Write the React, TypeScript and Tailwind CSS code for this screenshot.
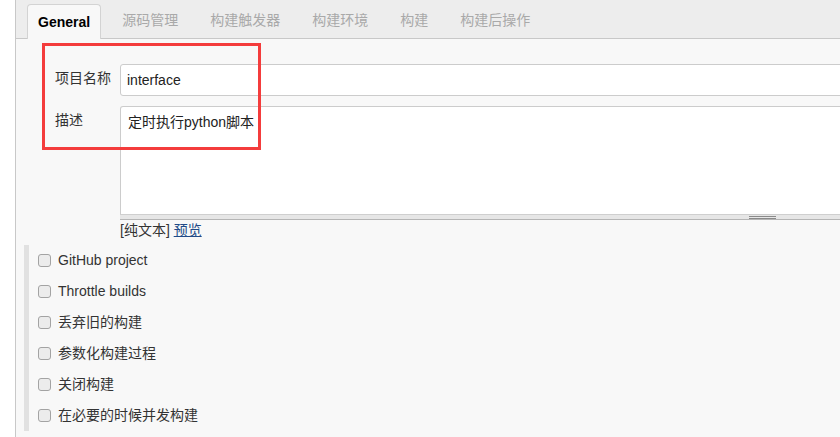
import React from "react";

const font = { fontFamily: '"Liberation Sans", "Noto Sans CJK SC", Arial, sans-serif' };

const tabs = ["源码管理", "构建触发器", "构建环境", "构建", "构建后操作"];
const options = ["GitHub project", "Throttle builds", "丢弃旧的构建", "参数化构建过程", "关闭构建", "在必要的时候并发构建"];

export default function App() {
  return (
    <div className="w-[840px] h-[437px] bg-white flex overflow-hidden text-[14px] text-[#333]" style={font}>
      <div className="w-[15px] shrink-0" />
      <div className="relative flex-1 min-w-0 border-l border-[#c8c8c8] bg-[#f8f8f8] flex flex-col">
        {/* tab bar */}
        <div className="h-[39px] shrink-0 bg-[#ededed] border-b border-[#c8c8c8] flex items-end pl-[11px] gap-[10px]">
          <div className="h-[35px] -mb-px flex items-center px-[10px] border border-b-0 border-[#d3d3d3] rounded-t-[4px] bg-[#f8f8f8] font-bold text-black">
            General
          </div>
          {tabs.map((t) => (
            <div key={t} className="h-[35px] flex items-center px-[11px] pb-[1px] text-[#a9a9a9]">
              {t}
            </div>
          ))}
        </div>

        {/* form */}
        <div className="mt-[25px] flex flex-col gap-[10px]">
          <div className="flex">
            <div className="w-[104px] shrink-0 pl-[39px] pt-[4px] leading-[20px]">项目名称</div>
            <div className="w-[740px] shrink-0 h-[32px] bg-white border border-[#cccccc] rounded-[3px] flex items-center pl-[6px] text-[#222]">
              interface
            </div>
          </div>
          <div className="flex">
            <div className="w-[104px] shrink-0 pl-[39px] pt-[4px] leading-[20px]">描述</div>
            <div className="w-[740px] shrink-0 flex flex-col">
              <div className="h-[108px] bg-white border border-[#cccccc] border-b-0 rounded-tl-[3px] pl-[7px] pt-[5px] leading-[20px] text-[#222]">
                定时执行python脚本
              </div>
              <div className="h-[6px] bg-[#e6e6e6] border-t border-b border-t-[#cfcfcf] border-b-[#b5b5b5] relative">
                <div className="absolute left-[629px] top-[1px] w-[27px] h-px bg-[#8a8a8a]" />
                <div className="absolute left-[629px] top-[3px] w-[27px] h-px bg-[#8a8a8a]" />
              </div>
              <div className="mt-px leading-[18px]">
                [纯文本] <span className="text-[#204a87] underline">预览</span>
              </div>
            </div>
          </div>
        </div>

        {/* options */}
        <div className="mt-[6px] ml-[8px] border-l-[5px] border-[#e1e1e1] pl-[9px] flex flex-col">
          {options.map((o) => (
            <div key={o} className="h-[31px] flex items-center gap-[7px]">
              <div className="w-[13px] h-[13px] rounded-[3px] border border-[#a3a3a3] bg-[#ececec]" />
              <span>{o}</span>
            </div>
          ))}
        </div>

        {/* red annotation box */}
        <div className="absolute left-[26px] top-[43px] w-[219px] h-[107px] border-[3px] border-[#f43c3c]" />
      </div>
    </div>
  );
}
